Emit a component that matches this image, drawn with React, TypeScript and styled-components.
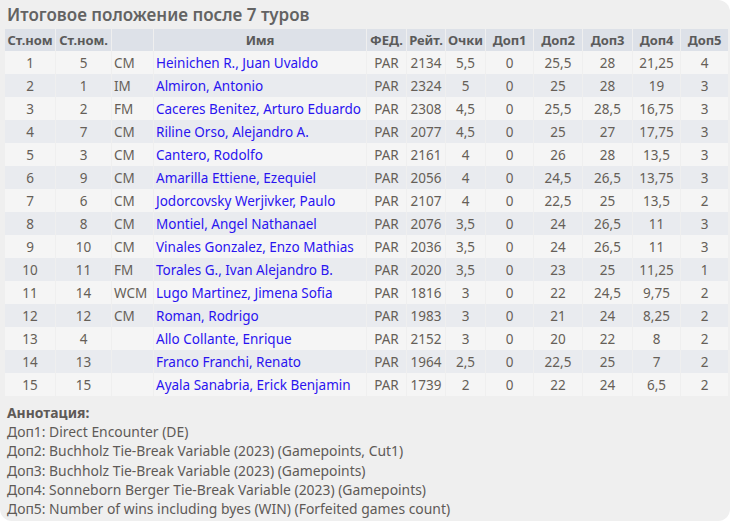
import * as React from 'react';
import styled, { createGlobalStyle } from 'styled-components';

const GlobalStyle = createGlobalStyle`
  html, body {
    margin: 0;
    padding: 0;
    background: #ffffff;
  }
  body {
    font-family: "Noto Sans", "Open Sans", "Liberation Sans", sans-serif;
  }
`;

const Panel = styled.div`
  width: 730px;
  height: 521px;
  box-sizing: border-box;
  background-color: #efefef;
  border-radius: 0 12px 12px 12px;
  padding: 4px 1px 0 5px;
  color: #5e5a57;
`;

const Title = styled.h1`
  margin: 0 0 3px 2px;
  font-size: 17px;
  line-height: 22px;
  font-weight: 600;
  color: #636363;
`;

const Table = styled.table`
  border-collapse: separate;
  border-spacing: 1px 0;
  margin-left: -1px;
  table-layout: fixed;
  width: 725px;
  font-size: 13.5px;
`;

const HeadCell = styled.th`
  background-color: #dde1e8;
  height: 22px;
  padding: 0;
  font-size: 13px;
  font-weight: 700;
  color: #5a5a5a;
  text-align: center;
  white-space: nowrap;
  letter-spacing: -0.1px;
`;

const Row = styled.tr<{ $alt: boolean }>`
  background-color: ${(p) => (p.$alt ? '#e9ebef' : '#f5f5f5')};
`;

const Cell = styled.td<{ $align?: 'left' | 'center' }>`
  height: 23px;
  padding: 0 0 0 ${(p) => (p.$align === 'left' ? '2px' : '0')};
  text-align: ${(p) => p.$align || 'center'};
  white-space: nowrap;
  overflow: hidden;
  color: #665f58;
`;

const NameCell = styled(Cell)`
  color: #2a14f0;
`;

const Notes = styled.div`
  margin-top: 7px;
  padding-left: 2px;
  font-size: 13.9px;
  line-height: 19.2px;
  color: #5e5a57;
`;

const NotesTitle = styled.div`
  font-weight: 700;
`;

type Player = {
  rank: number;
  start: number;
  title: string;
  name: string;
  fed: string;
  rating: number;
  pts: string;
  tb: string[];
};

const players: Player[] = [
  { rank: 1, start: 5, title: 'CM', name: 'Heinichen R., Juan Uvaldo', fed: 'PAR', rating: 2134, pts: '5,5', tb: ['0', '25,5', '28', '21,25', '4'] },
  { rank: 2, start: 1, title: 'IM', name: 'Almiron, Antonio', fed: 'PAR', rating: 2324, pts: '5', tb: ['0', '25', '28', '19', '3'] },
  { rank: 3, start: 2, title: 'FM', name: 'Caceres Benitez, Arturo Eduardo', fed: 'PAR', rating: 2308, pts: '4,5', tb: ['0', '25,5', '28,5', '16,75', '3'] },
  { rank: 4, start: 7, title: 'CM', name: 'Riline Orso, Alejandro A.', fed: 'PAR', rating: 2077, pts: '4,5', tb: ['0', '25', '27', '17,75', '3'] },
  { rank: 5, start: 3, title: 'CM', name: 'Cantero, Rodolfo', fed: 'PAR', rating: 2161, pts: '4', tb: ['0', '26', '28', '13,5', '3'] },
  { rank: 6, start: 9, title: 'CM', name: 'Amarilla Ettiene, Ezequiel', fed: 'PAR', rating: 2056, pts: '4', tb: ['0', '24,5', '26,5', '13,75', '3'] },
  { rank: 7, start: 6, title: 'CM', name: 'Jodorcovsky Werjivker, Paulo', fed: 'PAR', rating: 2107, pts: '4', tb: ['0', '22,5', '25', '13,5', '2'] },
  { rank: 8, start: 8, title: 'CM', name: 'Montiel, Angel Nathanael', fed: 'PAR', rating: 2076, pts: '3,5', tb: ['0', '24', '26,5', '11', '3'] },
  { rank: 9, start: 10, title: 'CM', name: 'Vinales Gonzalez, Enzo Mathias', fed: 'PAR', rating: 2036, pts: '3,5', tb: ['0', '24', '26,5', '11', '3'] },
  { rank: 10, start: 11, title: 'FM', name: 'Torales G., Ivan Alejandro B.', fed: 'PAR', rating: 2020, pts: '3,5', tb: ['0', '23', '25', '11,25', '1'] },
  { rank: 11, start: 14, title: 'WCM', name: 'Lugo Martinez, Jimena Sofia', fed: 'PAR', rating: 1816, pts: '3', tb: ['0', '22', '24,5', '9,75', '2'] },
  { rank: 12, start: 12, title: 'CM', name: 'Roman, Rodrigo', fed: 'PAR', rating: 1983, pts: '3', tb: ['0', '21', '24', '8,25', '2'] },
  { rank: 13, start: 4, title: '', name: 'Allo Collante, Enrique', fed: 'PAR', rating: 2152, pts: '3', tb: ['0', '20', '22', '8', '2'] },
  { rank: 14, start: 13, title: '', name: 'Franco Franchi, Renato', fed: 'PAR', rating: 1964, pts: '2,5', tb: ['0', '22,5', '25', '7', '2'] },
  { rank: 15, start: 15, title: '', name: 'Ayala Sanabria, Erick Benjamin', fed: 'PAR', rating: 1739, pts: '2', tb: ['0', '22', '24', '6,5', '2'] },
];

const columns = [
  { label: 'Ст.ном', width: 50 },
  { label: 'Ст.ном.', width: 55 },
  { label: '', width: 41 },
  { label: 'Имя', width: 212 },
  { label: 'ФЕД.', width: 39 },
  { label: 'Рейт.', width: 38 },
  { label: 'Очки', width: 39 },
  { label: 'Доп1', width: 47 },
  { label: 'Доп2', width: 48 },
  { label: 'Доп3', width: 49 },
  { label: 'Доп4', width: 47 },
  { label: 'Доп5', width: 47 },
];

const notes = [
  'Доп1: Direct Encounter (DE)',
  'Доп2: Buchholz Tie-Break Variable (2023) (Gamepoints, Cut1)',
  'Доп3: Buchholz Tie-Break Variable (2023) (Gamepoints)',
  'Доп4: Sonneborn Berger Tie-Break Variable (2023) (Gamepoints)',
  'Доп5: Number of wins including byes (WIN) (Forfeited games count)',
];

export default function App() {
  return (
    <Panel>
      <GlobalStyle />
      <Title>Итоговое положение после 7 туров</Title>
      <Table>
        <colgroup>
          {columns.map((c, i) => (
            <col key={i} style={{ width: c.width }} />
          ))}
        </colgroup>
        <thead>
          <tr>
            {columns.map((c, i) => (
              <HeadCell key={i}>{c.label}</HeadCell>
            ))}
          </tr>
        </thead>
        <tbody>
          {players.map((p, i) => (
            <Row key={p.rank} $alt={i % 2 === 1}>
              <Cell>{p.rank}</Cell>
              <Cell>{p.start}</Cell>
              <Cell $align="left">{p.title}</Cell>
              <NameCell $align="left">{p.name}</NameCell>
              <Cell>{p.fed}</Cell>
              <Cell>{p.rating}</Cell>
              <Cell>{p.pts}</Cell>
              {p.tb.map((t, j) => (
                <Cell key={j}>{t}</Cell>
              ))}
            </Row>
          ))}
        </tbody>
      </Table>
      <Notes>
        <NotesTitle>Аннотация:</NotesTitle>
        {notes.map((n) => (
          <div key={n}>{n}</div>
        ))}
      </Notes>
    </Panel>
  );
}
